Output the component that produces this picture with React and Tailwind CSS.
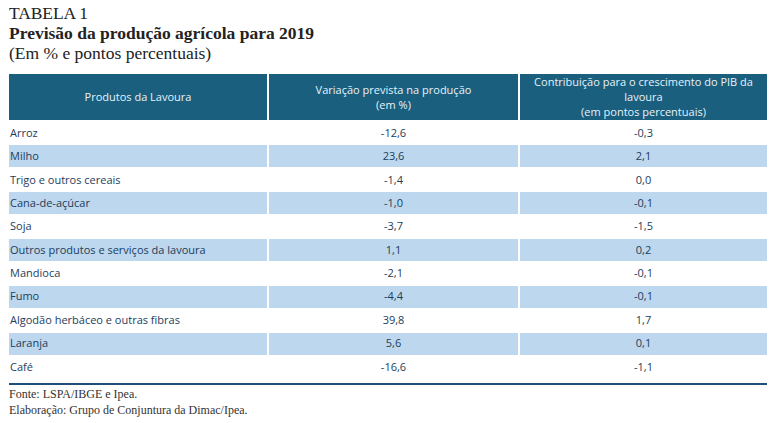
export default function App() {
  const rows = [
    ["Arroz", "-12,6", "-0,3"],
    ["Milho", "23,6", "2,1"],
    ["Trigo e outros cereais", "-1,4", "0,0"],
    ["Cana-de-açúcar", "-1,0", "-0,1"],
    ["Soja", "-3,7", "-1,5"],
    ["Outros produtos e serviços da lavoura", "1,1", "0,2"],
    ["Mandioca", "-2,1", "-0,1"],
    ["Fumo", "-4,4", "-0,1"],
    ["Algodão herbáceo e outras fibras", "39,8", "1,7"],
    ["Laranja", "5,6", "0,1"],
    ["Café", "-16,6", "-1,1"],
  ];
  const sans = { fontFamily: '"Open Sans", "Noto Sans", sans-serif' };
  return (
    <div className="w-[773px] h-[423px] bg-white relative overflow-hidden" >
      <div className="pl-[9px] pt-[3px] text-[#222] leading-[20px]" style={{ fontFamily: '"Liberation Serif", serif' }}>
        <div className="text-[17.5px] tracking-[-0.1px]">TABELA 1</div>
        <div className="text-[17.5px] font-bold">Previsão da produção agrícola para 2019</div>
        <div className="text-[17.5px]">(Em % e pontos percentuais)</div>
      </div>
      <div className="absolute left-[9px] top-[74px] w-[758px]" style={sans}>
        <div className="flex gap-[2px] h-[45.5px] text-[11px] text-[#e6f2fb] leading-[15px]">
          <div className="w-[258px] bg-[#1a5f7e] flex items-center justify-center">Produtos da Lavoura</div>
          <div className="w-[249px] bg-[#1a5f7e] flex flex-col items-center justify-center text-center">
            <span>Variação prevista na produção</span>
            <span>(em %)</span>
          </div>
          <div className="flex-1 bg-[#1a5f7e] flex flex-col items-center justify-center text-center">
            <span>Contribuição para o crescimento do PIB da</span>
            <span>lavoura</span>
            <span>(em pontos percentuais)</span>
          </div>
        </div>
        <div className="flex flex-col gap-[1.4px] pt-[2.5px] text-[11px] text-[#1d3d5c]">
          {rows.map((r, i) => {
            const bg = i % 2 === 1 ? "bg-[#bcd7ee]" : "bg-white";
            return (
              <div key={i} className="flex gap-[2px] h-[22px]">
                <div className={`w-[258px] ${bg} flex items-center pl-[1px]`}>{r[0]}</div>
                <div className={`w-[249px] ${bg} flex items-center justify-center`}>{r[1]}</div>
                <div className={`flex-1 ${bg} flex items-center justify-center`}>{r[2]}</div>
              </div>
            );
          })}
        </div>
        <div className="mt-[5px] h-[2px] bg-[#1f4e79]" />
      </div>
      <div className="absolute left-[9px] top-[386px] text-[12px] leading-[16px] text-[#333]" style={{ fontFamily: '"Liberation Serif", serif' }}>
        <div>Fonte: LSPA/IBGE e Ipea.</div>
        <div>Elaboração: Grupo de Conjuntura da Dimac/Ipea.</div>
      </div>
    </div>
  );
}
